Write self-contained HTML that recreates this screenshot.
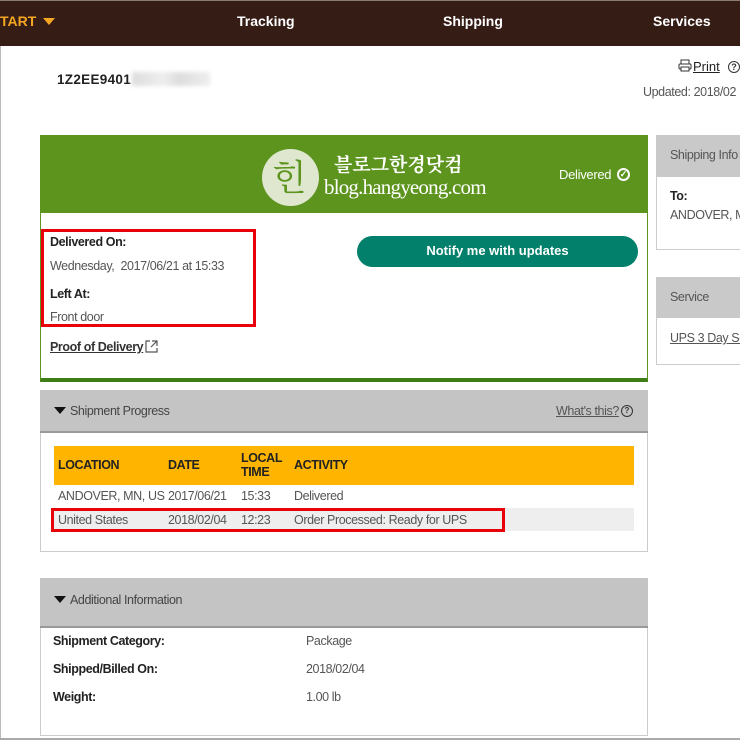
<!DOCTYPE html>
<html><head><meta charset="utf-8"><style>
*{margin:0;padding:0;box-sizing:border-box}
body{width:740px;height:740px;overflow:hidden;background:#fff;font-family:"Liberation Sans",sans-serif;color:#333;position:relative}
.a{position:absolute;white-space:nowrap}
.nav{left:0;top:0;width:740px;height:46px;background:#351c15;border-top:1px solid #8a7a74}
.nv{color:#fff;font-weight:bold;font-size:14px;top:13px}
.s12{font-size:12.5px;letter-spacing:-0.4px}
.b{font-weight:bold;color:#222}
.g{color:#555}
.tri{display:inline-block;width:0;height:0;border-left:6px solid transparent;border-right:6px solid transparent;border-top:7px solid #111;margin-right:4px;vertical-align:1px}
</style></head><body>
<div class="a" style="left:0;top:0;width:1px;height:740px;background:#bbb"></div>
<div class="a nav"></div>
<div class="a nv" style="left:0;color:#f5a623">TART <span class="tri" style="border-top-color:#f5a623;margin-left:3px"></span></div>
<div class="a nv" style="left:237px">Tracking</div>
<div class="a nv" style="left:443px">Shipping</div>
<div class="a nv" style="left:653px">Services</div>

<div class="a" style="left:57px;top:72px;font-size:13.5px;font-weight:bold;color:#222;letter-spacing:0.3px">1Z2EE9401</div>
<div class="a" style="left:132px;top:72px;width:78px;height:14px;background:linear-gradient(90deg,#ddd,#eee 40%,#ddd 60%,#eee);filter:blur(2px)"></div>
<svg class="a" style="left:678px;top:59px" width="14" height="13" viewBox="0 0 14 13"><rect x="3" y="1" width="8" height="4" fill="none" stroke="#333"/><rect x="1" y="5" width="12" height="5" rx="1" fill="none" stroke="#333"/><rect x="3" y="8" width="8" height="4" fill="#fff" stroke="#333"/></svg>
<div class="a" style="left:693px;top:59px;font-size:13px;text-decoration:underline;color:#222">Print</div>
<div class="a" style="left:728px;top:61px;width:12px;height:12px;border:1.5px solid #333;border-radius:50%;font-size:9px;text-align:center;line-height:10px;font-weight:bold">?</div>
<div class="a s12 g" style="left:643px;top:85px">Updated: 2018/02</div>

<!-- main card -->
<div class="a" style="left:40px;top:135px;width:608px;height:247px;border:1px solid #5c941e;border-bottom:4px solid #3f7d17"></div>
<div class="a" style="left:40px;top:135px;width:608px;height:78px;background:#5c941e"></div>
<div class="a" style="left:262px;top:149px;width:57px;height:57px;border-radius:50%;background:#dfe8cf"></div>
<div class="a" style="left:272px;top:150px;font-family:'Noto Serif CJK SC',serif;font-size:36px;color:#5c941e">힌</div>
<div class="a" style="left:334px;top:150px;color:#fff;font-size:19px;font-weight:bold;font-family:'Noto Serif CJK SC','Liberation Serif',serif;letter-spacing:0px">블로그한경닷컴</div>
<div class="a" style="left:324px;top:175px;color:#fff;font-size:21px;font-family:'Liberation Serif',serif;letter-spacing:-0.8px">blog.hangyeong.com</div>
<div class="a" style="left:559px;top:167px;color:#fff;font-size:13px;letter-spacing:-0.3px">Delivered</div>
<div class="a" style="left:617px;top:168px;width:13px;height:13px;border:2px solid #fff;border-radius:50%;color:#fff;font-size:9px;line-height:9px;text-align:center;font-weight:bold">✓</div>

<div class="a" style="left:41px;top:229px;width:215px;height:98px;border:3px solid #e8000b"></div>
<div class="a s12 b" style="left:50px;top:235px">Delivered On:</div>
<div class="a s12 g" style="left:50px;top:259px">Wednesday,&nbsp; 2017/06/21 at 15:33</div>
<div class="a s12 b" style="left:50px;top:287px">Left At:</div>
<div class="a s12 g" style="left:50px;top:310px">Front door</div>
<div class="a s12 b" style="left:50px;top:340px;text-decoration:underline;color:#333">Proof of Delivery</div>
<svg class="a" style="left:145px;top:340px" width="13" height="13" viewBox="0 0 13 13"><path d="M5 1H1v11h11V8M7 1h5v5M12 1 6 7" fill="none" stroke="#555" stroke-width="1.2"/></svg>
<div class="a" style="left:357px;top:236px;width:281px;height:31px;border-radius:16px;background:#02806b;color:#fff;font-weight:bold;font-size:13px;text-align:center;line-height:30px">Notify me with updates</div>

<!-- right panels -->
<div class="a" style="left:656px;top:135px;width:90px;height:115px;border:1px solid #ccc"></div>
<div class="a" style="left:656px;top:135px;width:90px;height:42px;background:#c9c9c9"></div>
<div class="a s12 g" style="left:670px;top:148px">Shipping Info</div>
<div class="a s12 b" style="left:670px;top:189px">To:</div>
<div class="a s12 g" style="left:670px;top:208px">ANDOVER, MN</div>
<div class="a" style="left:656px;top:277px;width:90px;height:88px;border:1px solid #ccc"></div>
<div class="a" style="left:656px;top:277px;width:90px;height:41px;background:#c9c9c9"></div>
<div class="a s12 g" style="left:670px;top:290px">Service</div>
<div class="a s12 g" style="left:670px;top:331px;text-decoration:underline">UPS 3 Day Select</div>

<!-- progress -->
<div class="a" style="left:40px;top:390px;width:608px;height:162px;border:1px solid #ccc"></div>
<div class="a" style="left:40px;top:390px;width:608px;height:43px;background:#c4c4c4;border-bottom:2px solid #999"></div>
<div class="a s12 g" style="left:54px;top:404px;color:#444"><span class="tri"></span>Shipment Progress</div>
<div class="a s12 g" style="left:556px;top:404px;text-decoration:underline">What's this?</div>
<div class="a" style="left:621px;top:405px;width:12px;height:12px;border:1.5px solid #333;border-radius:50%;font-size:8px;text-align:center;line-height:9px;font-weight:bold">?</div>
<div class="a" style="left:54px;top:446px;width:580px;height:39px;background:#ffb500"></div>
<div class="a s12 b" style="left:58px;top:458px">LOCATION</div>
<div class="a s12 b" style="left:168px;top:458px">DATE</div>
<div class="a s12 b" style="left:241px;top:451px;line-height:14px">LOCAL<br>TIME</div>
<div class="a s12 b" style="left:294px;top:458px">ACTIVITY</div>
<div class="a" style="left:54px;top:508px;width:580px;height:23px;background:#eee"></div>
<div class="a s12 g" style="left:58px;top:489px">ANDOVER, MN, US</div>
<div class="a s12 g" style="left:168px;top:489px">2017/06/21</div>
<div class="a s12 g" style="left:241px;top:489px">15:33</div>
<div class="a s12 g" style="left:294px;top:489px">Delivered</div>
<div class="a s12 g" style="left:58px;top:513px">United States</div>
<div class="a s12 g" style="left:168px;top:513px">2018/02/04</div>
<div class="a s12 g" style="left:241px;top:513px">12:23</div>
<div class="a s12 g" style="left:294px;top:513px">Order Processed: Ready for UPS</div>
<div class="a" style="left:51px;top:508px;width:454px;height:24px;border:3px solid #e8000b"></div>

<!-- additional -->
<div class="a" style="left:40px;top:578px;width:608px;height:158px;border:1px solid #ccc"></div>
<div class="a" style="left:40px;top:578px;width:608px;height:50px;background:#c4c4c4;border-bottom:2px solid #999"></div>
<div class="a s12 g" style="left:54px;top:593px;color:#444"><span class="tri"></span>Additional Information</div>
<div class="a s12 b" style="left:53px;top:634px">Shipment Category:</div>
<div class="a s12 g" style="left:306px;top:634px">Package</div>
<div class="a s12 b" style="left:53px;top:662px">Shipped/Billed On:</div>
<div class="a s12 g" style="left:306px;top:662px">2018/02/04</div>
<div class="a s12 b" style="left:53px;top:690px">Weight:</div>
<div class="a s12 g" style="left:306px;top:690px">1.00 lb</div>
<div class="a" style="left:0;top:738px;width:740px;height:2px;background:#aaa"></div>
</body></html>
